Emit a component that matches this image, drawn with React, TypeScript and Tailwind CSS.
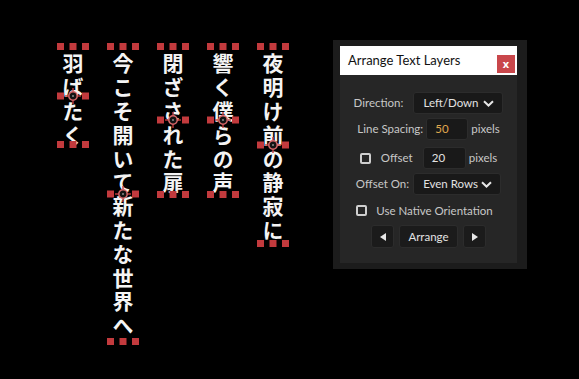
const RED = "bg-[#c23a3d]";

const LINES = [
  "夜明け前の静寂に",
  "響く僕らの声",
  "閉ざされた扉",
  "今こそ開いて新たな世界へ",
  "羽ばたく",
];

function Handle({ className }: { className: string }) {
  return <span className={`absolute h-[7px] w-[7px] ${RED} ${className}`} />;
}

function Anchor() {
  return (
    <svg
      width="16"
      height="16"
      viewBox="0 0 16 16"
      className="absolute left-1/2 top-1/2 -translate-x-1/2 -translate-y-1/2"
    >
      <g stroke="#c23a3d" strokeWidth="1.4">
        <line x1="8" y1="0" x2="8" y2="3.5" />
        <line x1="8" y1="12.5" x2="8" y2="16" />
        <line x1="0" y1="8" x2="3.5" y2="8" />
        <line x1="12.5" y1="8" x2="16" y2="8" />
      </g>
      <circle cx="8" cy="8" r="4.2" fill="#141414" stroke="#d8686a" strokeWidth="1.5" />
      <circle cx="8" cy="8" r="1" fill="#8a8a8a" />
    </svg>
  );
}

function TextColumn({ text }: { text: string }) {
  const chars = Array.from(text).length;
  return (
    <div className="relative w-[25px] shrink-0" style={{ height: chars * 24.6 }}>
      <div className="absolute inset-x-0 top-[6px] flex justify-center">
        <p className="font-['Noto_Sans_CJK_JP',sans-serif] text-[21px] font-bold leading-[25px] tracking-[2.8px] text-[#f4f4f4] [writing-mode:vertical-rl] [text-orientation:upright]">
          {text}
        </p>
      </div>
      <Handle className="-left-[3.5px] -top-[3.5px]" />
      <Handle className="left-1/2 -top-[3.5px] -translate-x-1/2" />
      <Handle className="-right-[3.5px] -top-[3.5px]" />
      <Handle className="-left-[3.5px] top-1/2 -translate-y-1/2" />
      <Handle className="-right-[3.5px] top-1/2 -translate-y-1/2" />
      <Handle className="-left-[3.5px] -bottom-[3.5px]" />
      <Handle className="left-1/2 -bottom-[3.5px] -translate-x-1/2" />
      <Handle className="-right-[3.5px] -bottom-[3.5px]" />
      <Anchor />
    </div>
  );
}

function Chevron() {
  return (
    <svg width="11" height="7" viewBox="0 0 11 7" fill="none">
      <path d="M1 1.2 L5.5 5.5 L10 1.2" stroke="#e6e6e6" strokeWidth="2" />
    </svg>
  );
}

function Select({ value, width }: { value: string; width: string }) {
  return (
    <div
      className={`flex h-[22px] ${width} items-center justify-between rounded-[3px] border border-[#2c2c2c] bg-[#191919] pl-[9px] pr-[8px] text-[#e2e2e2]`}
    >
      <span>{value}</span>
      <Chevron />
    </div>
  );
}

function NumberInput({ value, color, width }: { value: string; color: string; width: string }) {
  return (
    <div
      className={`flex h-[22px] ${width} items-center rounded-[3px] border border-[#2c2c2c] bg-[#191919] pl-[8px] ${color}`}
    >
      {value}
    </div>
  );
}

function Checkbox() {
  return <span className="h-[11px] w-[11px] rounded-[2px] border-[2px] border-[#cfcfcf]" />;
}

function ArrowButton({ dir }: { dir: "left" | "right" }) {
  return (
    <button className="flex h-[23px] w-[23px] items-center justify-center rounded-[3px] border border-[#2c2c2c] bg-[#1b1b1b]">
      <svg width="6" height="8" viewBox="0 0 6 8">
        {dir === "left" ? (
          <polygon points="6,0 6,8 0,4" fill="#e6e6e6" />
        ) : (
          <polygon points="0,0 0,8 6,4" fill="#e6e6e6" />
        )}
      </svg>
    </button>
  );
}

function ArrangePanel() {
  return (
    <div className="ml-[48px] mt-[40px] h-[229px] w-[194px] shrink-0 bg-[#1c1c1c] pl-[7px] pt-[6px]">
      <div className="w-[177px]">
        <div className="flex h-[29px] items-center justify-between bg-white pl-[8px] pr-[2px]">
          <span className="font-['Lato',sans-serif] text-[13px] text-[#111]">Arrange Text Layers</span>
          <button className="mt-[6px] flex h-[18px] w-[18px] items-center justify-center bg-[#c9474b] text-[11px] font-bold leading-none text-white">
            x
          </button>
        </div>
        <div className="flex h-[188px] flex-col items-center bg-[#262626] pt-[17px] font-['Lato',sans-serif] text-[11.5px] text-[#c8c8c8]">
          <div className="flex items-center gap-[10px]">
            <span>Direction:</span>
            <Select value="Left/Down" width="w-[90px]" />
          </div>
          <div className="mt-[4px] flex items-center gap-[3px]">
            <span>Line Spacing:</span>
            <NumberInput value="50" color="text-[#e0a84e]" width="w-[42px]" />
            <span>pixels</span>
          </div>
          <div className="mt-[7px] flex items-center">
            <Checkbox />
            <span className="ml-[10px]">Offset</span>
            <div className="ml-[10px]">
              <NumberInput value="20" color="text-[#e2e2e2]" width="w-[43px]" />
            </div>
            <span className="ml-[3px]">pixels</span>
          </div>
          <div className="mt-[4px] flex items-center gap-[4px]">
            <span>Offset On:</span>
            <Select value="Even Rows" width="w-[88px]" />
          </div>
          <div className="mt-[7px] flex items-center gap-[9px] pr-[8px]">
            <Checkbox />
            <span>Use Native Orientation</span>
          </div>
          <div className="mt-[6px] flex items-center gap-[5px]">
            <ArrowButton dir="left" />
            <button className="flex h-[23px] w-[59px] items-center justify-center rounded-[3px] border border-[#2c2c2c] bg-[#1b1b1b] text-[#e2e2e2]">
              Arrange
            </button>
            <ArrowButton dir="right" />
          </div>
        </div>
      </div>
    </div>
  );
}

export default function App() {
  return (
    <div className="flex h-[379px] w-[579px] items-start overflow-hidden bg-black">
      <div className="ml-[60px] mt-[46.5px] flex flex-row-reverse items-start gap-[25px]">
        {LINES.map((line) => (
          <TextColumn key={line} text={line} />
        ))}
      </div>
      <ArrangePanel />
    </div>
  );
}
